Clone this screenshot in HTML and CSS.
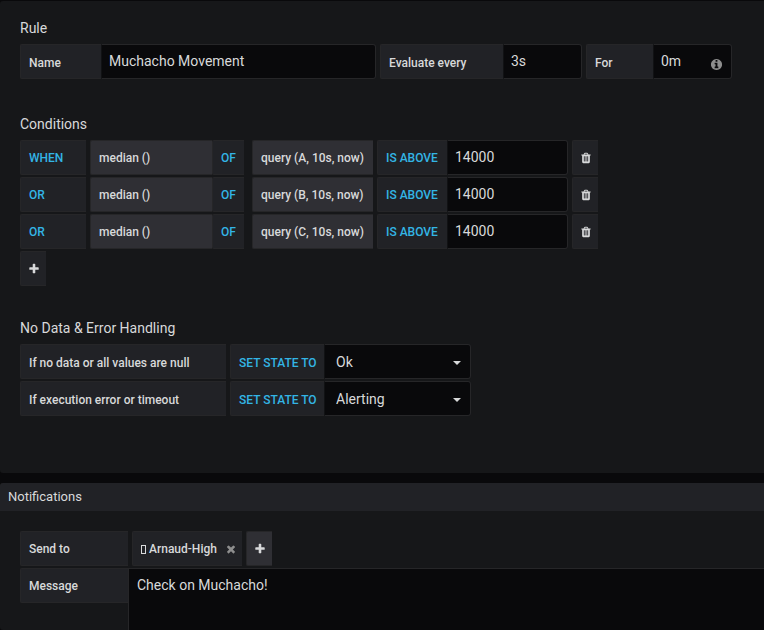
FILE: index.html
```html
<!DOCTYPE html>
<html lang="en">
<head>
    <meta charset="UTF-8">
    <meta name="viewport" content="width=device-width, initial-scale=1.0">
    <title>Alert rule</title>
    <link rel="stylesheet" href="styles.css">
</head>
<body>
    <!-- icons -->
    <svg class="sprite" aria-hidden="true">
        <symbol id="plus" viewBox="0 0 1792 1792"><path d="M1600 736v192q0 40-28 68t-68 28h-416v416q0 40-28 68t-68 28h-192q-40 0-68-28t-28-68v-416h-416q-40 0-68-28t-28-68v-192q0-40 28-68t68-28h416v-416q0-40 28-68t68-28h192q40 0 68 28t28 68v416h416q40 0 68 28t28 68z"/></symbol>
        <symbol id="times" viewBox="0 0 1792 1792"><path d="M1490 1322q0 40-28 68l-136 136q-28 28-68 28t-68-28l-294-294-294 294q-28 28-68 28t-68-28l-136-136q-28-28-28-68t28-68l294-294-294-294q-28-28-28-68t28-68l136-136q28-28 68-28t68 28l294 294 294-294q28-28 68-28t68 28l136 136q28 28 28 68t-28 68l-294 294 294 294q28 28 28 68z"/></symbol>
        <symbol id="info" viewBox="0 0 1792 1792"><path d="M1152 1376v-160q0-14-9-23t-23-9h-96v-512q0-14-9-23t-23-9h-320q-14 0-23 9t-9 23v160q0 14 9 23t23 9h96v320h-96q-14 0-23 9t-9 23v160q0 14 9 23t23 9h448q14 0 23-9t9-23zm-128-896v-160q0-14-9-23t-23-9h-192q-14 0-23 9t-9 23v160q0 14 9 23t23 9h192q14 0 23-9t9-23zm640 416q0 209-103 385.5t-279.5 279.5-385.5 103-385.5-103-279.5-279.5-103-385.5 103-385.5 279.5-279.5 385.5-103 385.5 103 279.5 279.5 103 385.5z"/></symbol>
        <symbol id="trash" viewBox="0 0 1792 1792"><path d="M704 1376v-704q0-14-9-23t-23-9h-64q-14 0-23 9t-9 23v704q0 14 9 23t23 9h64q14 0 23-9t9-23zm256 0v-704q0-14-9-23t-23-9h-64q-14 0-23 9t-9 23v704q0 14 9 23t23 9h64q14 0 23-9t9-23zm256 0v-704q0-14-9-23t-23-9h-64q-14 0-23 9t-9 23v704q0 14 9 23t23 9h64q14 0 23-9t9-23zm-544-992h448l-48-117q-7-9-17-11h-317q-10 2-17 11zm928 32v64q0 14-9 23t-23 9h-96v948q0 83-47 143.5t-113 60.5h-832q-66 0-113-58.5t-47-141.5v-952h-96q-14 0-23-9t-9-23v-64q0-14 9-23t23-9h309l70-167q15-37 54-63t79-26h320q40 0 79 26t54 63l70 167h309q14 0 23 9t9 23z"/></symbol>
    </svg>

    <form class="panel alert">
        <section class="group settings rule">
            <h2>Rule</h2>
            <div class="row">
                <div class="field">
                    <label class="label name" for="name">Name</label>
                    <input class="input name-input" id="name" type="text" value="Muchacho Movement">
                </div>
                <div class="field">
                    <label class="label every" for="every">Evaluate every</label>
                    <input class="input short" id="every" type="text" value="3s">
                </div>
                <div class="field">
                    <label class="label for" for="for">For</label>
                    <input class="input short" id="for" type="text" value="0m">
                    <svg class="icon info"><use href="#info"/></svg>
                </div>
            </div>
        </section>

        <section class="group">
            <h2>Conditions</h2>
            <div class="row">
                <button type="button" class="label keyword operator">WHEN</button>
                <div class="field reducer">
                    <button type="button" class="label part median">median ()</button>
                    <span class="label keyword of">OF</span>
                </div>
                <button type="button" class="label part query">query (A, 10s, now)</button>
                <div class="field">
                    <label class="label keyword above" for="value-a">IS ABOVE</label>
                    <input class="input value" id="value-a" type="text" value="14000">
                </div>
                <button type="button" class="label icon-btn" aria-label="Delete condition A"><svg class="icon"><use href="#trash"/></svg></button>
            </div>
            <div class="row">
                <button type="button" class="label keyword operator">OR</button>
                <div class="field reducer">
                    <button type="button" class="label part median">median ()</button>
                    <span class="label keyword of">OF</span>
                </div>
                <button type="button" class="label part query">query (B, 10s, now)</button>
                <div class="field">
                    <label class="label keyword above" for="value-b">IS ABOVE</label>
                    <input class="input value" id="value-b" type="text" value="14000">
                </div>
                <button type="button" class="label icon-btn" aria-label="Delete condition B"><svg class="icon"><use href="#trash"/></svg></button>
            </div>
            <div class="row">
                <button type="button" class="label keyword operator">OR</button>
                <div class="field reducer">
                    <button type="button" class="label part median">median ()</button>
                    <span class="label keyword of">OF</span>
                </div>
                <button type="button" class="label part query">query (C, 10s, now)</button>
                <div class="field">
                    <label class="label keyword above" for="value-c">IS ABOVE</label>
                    <input class="input value" id="value-c" type="text" value="14000">
                </div>
                <button type="button" class="label icon-btn" aria-label="Delete condition C"><svg class="icon"><use href="#trash"/></svg></button>
            </div>
            <div class="row">
                <button type="button" class="label icon-btn" aria-label="Add condition"><svg class="icon"><use href="#plus"/></svg></button>
            </div>
        </section>

        <section class="group settings">
            <h2>No Data &amp; Error Handling</h2>
            <div class="row">
                <span class="label case">If no data or all values are null</span>
                <div class="field">
                    <label class="label keyword state" for="no-data">SET STATE TO</label>
                    <div class="select">
                        <select class="input" id="no-data">
                            <option>Ok</option>
                            <option>Alerting</option>
                        </select>
                    </div>
                </div>
            </div>
            <div class="row">
                <span class="label case">If execution error or timeout</span>
                <div class="field">
                    <label class="label keyword state" for="exec-error">SET STATE TO</label>
                    <div class="select">
                        <select class="input" id="exec-error">
                            <option>Alerting</option>
                            <option>Ok</option>
                        </select>
                    </div>
                </div>
            </div>
        </section>
    </form>

    <form class="panel notifications">
        <h1>Notifications</h1>
        <div class="notifications-body">
            <div class="row">
                <span class="label send">Send to</span>
                <span class="label channel">
                    <i class="glyph"></i>Arnaud-High
                    <button type="button" class="remove" aria-label="Remove Arnaud-High"><svg class="icon"><use href="#times"/></svg></button>
                </span>
                <button type="button" class="label part icon-btn" aria-label="Add channel"><svg class="icon"><use href="#plus"/></svg></button>
            </div>
            <div class="message">
                <label class="label send" for="message">Message</label>
                <textarea class="input" id="message">Check on Muchacho!</textarea>
            </div>
        </div>
    </form>
</body>
</html>
```

FILE: styles.css
```css
* {
    margin: 0;
    padding: 0;
    box-sizing: border-box;
}
body {
    display: flex;
    flex-direction: column;
    gap: 10px;
    min-height: 100vh;
    padding-top: 1px;
    background-color: #09090b;
    color: #d8d9da;
    font-family: Roboto, "Liberation Sans", sans-serif;
    font-size: 14px;
}
.sprite {
    display: none;
}
.panel {
    background-color: #161719;
    border-radius: 3px 0 0 3px;
}
.alert {
    padding: 17px 20px 57px;
}
h1 {
    padding: 0 8px;
    background-color: #212226;
    border-radius: 3px 0 0 0;
    font-size: 13px;
    font-weight: 400;
    line-height: 28px;
}
h2 {
    margin-bottom: 6px;
    font-size: 14px;
    font-weight: 400;
    line-height: 20px;
}

/* rows */
.group + .group {
    margin-top: 32px;
}
.rule {
    padding-bottom: 3px;
}
.row {
    display: flex;
    gap: 4px;
}
.row + .row {
    margin-top: 2px;
}
.field {
    display: flex;
    position: relative;
}
.reducer {
    margin-right: 4px;
}

/* labels and buttons */
.label {
    display: flex;
    align-items: center;
    flex-shrink: 0;
    height: 35px;
    padding: 1px 8px 0;
    background-color: #212226;
    border: 1px solid #262628;
    border-right: 0;
    border-radius: 2px 0 0 2px;
    color: #d8d9da;
    font-family: inherit;
    font-size: 12px;
    font-weight: 500;
    white-space: nowrap;
}
.settings .label {
    padding-top: 3px;
}
.label.keyword {
    color: #33b5e5;
}
.label.part {
    background-color: #2f2f34;
}
button {
    cursor: pointer;
}
.name {
    width: 81px;
}
.every {
    width: 123px;
}
.for {
    width: 67px;
}
.operator {
    width: 66px;
}
.median {
    width: 122px;
}
.of {
    width: 32px;
}
.query {
    width: 121px;
}
.above {
    width: 70px;
}
.case {
    width: 206px;
}
.state {
    width: 94px;
}
.send {
    width: 108px;
}
.icon-btn {
    justify-content: center;
    width: 26px;
    padding: 0;
}
.icon {
    display: block;
    flex-shrink: 0;
    width: 12px;
    height: 12px;
    fill: currentColor;
}

/* inputs */
.input {
    height: 35px;
    padding: 0 7px 2px;
    background-color: #09090b;
    border: 1px solid #262628;
    border-left-color: #111214;
    border-radius: 0 3px 3px 0;
    outline: none;
    color: #d8d9da;
    font-family: inherit;
    font-size: 14px;
}
.name-input {
    width: 275px;
}
.short {
    width: 79px;
}
.value {
    width: 121px;
}
.info {
    position: absolute;
    right: 9px;
    top: 14px;
    width: 13px;
    height: 13px;
    color: #8e8e8e;
}
.select {
    position: relative;
}
.select .input {
    appearance: none;
    width: 147px;
    padding: 0 11px;
}
.select::after {
    content: "";
    position: absolute;
    right: 10px;
    top: 17px;
    border: 4px solid transparent;
    border-top-color: #d8d9da;
    border-bottom: 0;
    pointer-events: none;
}

/* notifications */
.notifications {
    display: flex;
    flex-direction: column;
    flex: 1;
}
.notifications-body {
    display: flex;
    flex-direction: column;
    flex: 1;
    gap: 2px;
    padding: 20px 0 0 20px;
}
.channel {
    width: 110px;
    padding-right: 5px;
}
.glyph {
    flex-shrink: 0;
    width: 5px;
    height: 9px;
    margin-right: 3px;
    border: 1px solid #d8d9da;
}
.remove {
    margin-left: auto;
    background: none;
    border: 0;
    color: #8e8e8e;
}
.message {
    display: flex;
    flex: 1;
}
.message .input {
    flex: 1;
    height: auto;
    padding: 7px 8px;
    border-width: 1px 0 0 1px;
    border-color: #262628;
    border-radius: 0;
    line-height: 18px;
    resize: none;
}
```
